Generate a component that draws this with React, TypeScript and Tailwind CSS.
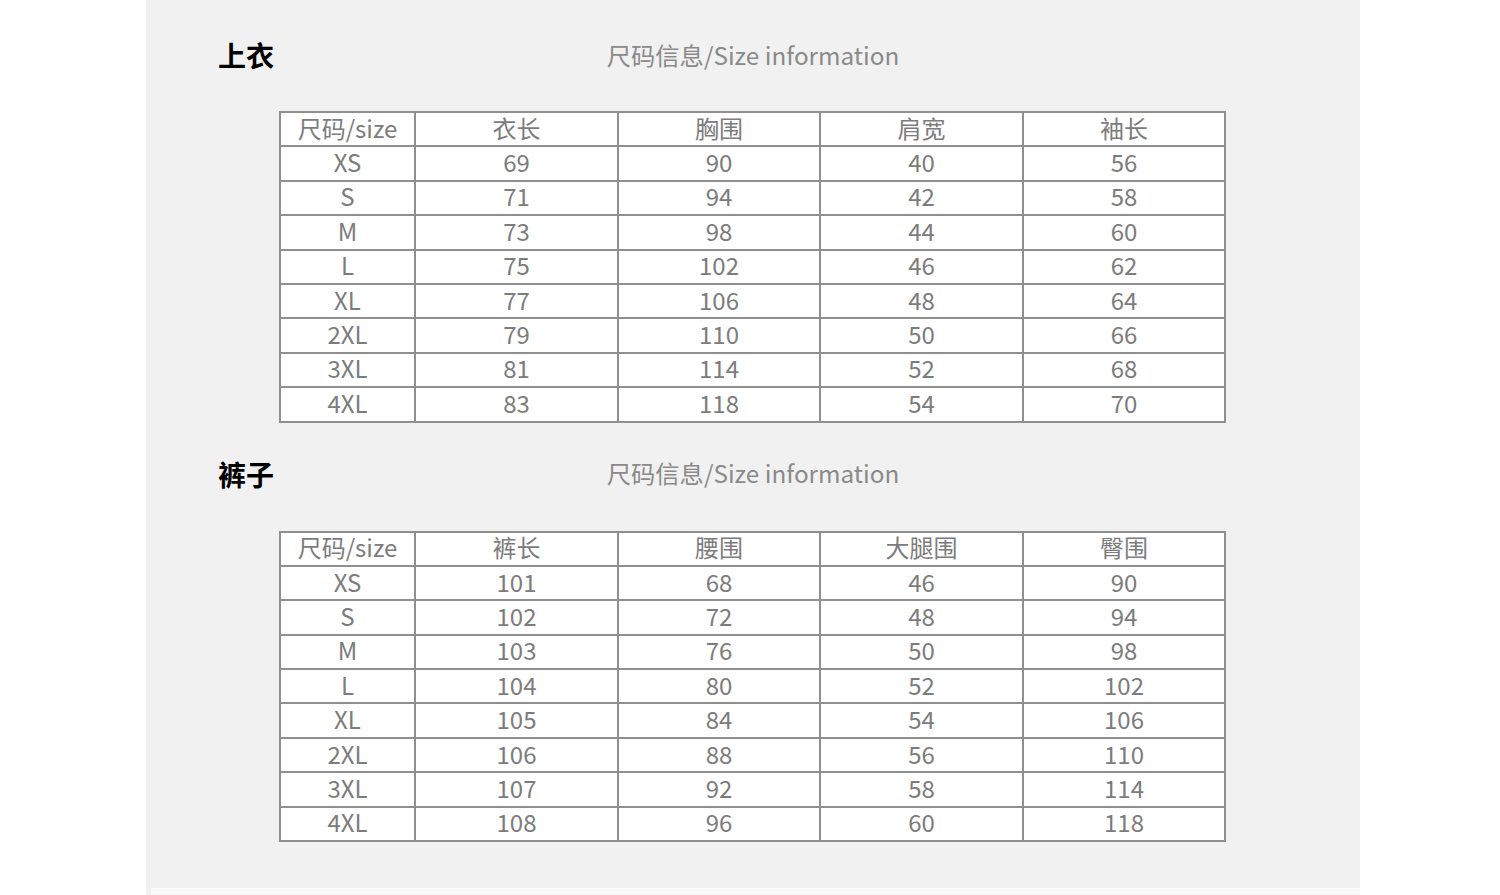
import React from 'react';

const tops = {
  title: '上衣',
  head: ['尺码/size', '衣长', '胸围', '肩宽', '袖长'],
  rows: [
    ['XS', '69', '90', '40', '56'],
    ['S', '71', '94', '42', '58'],
    ['M', '73', '98', '44', '60'],
    ['L', '75', '102', '46', '62'],
    ['XL', '77', '106', '48', '64'],
    ['2XL', '79', '110', '50', '66'],
    ['3XL', '81', '114', '52', '68'],
    ['4XL', '83', '118', '54', '70'],
  ],
};

const pants = {
  title: '裤子',
  head: ['尺码/size', '裤长', '腰围', '大腿围', '臀围'],
  rows: [
    ['XS', '101', '68', '46', '90'],
    ['S', '102', '72', '48', '94'],
    ['M', '103', '76', '50', '98'],
    ['L', '104', '80', '52', '102'],
    ['XL', '105', '84', '54', '106'],
    ['2XL', '106', '88', '56', '110'],
    ['3XL', '107', '92', '58', '114'],
    ['4XL', '108', '96', '60', '118'],
  ],
};

const colWidths = ['w-[135px]', 'w-[203px]', 'w-[202px]', 'w-[203px]', 'w-[202px]'];

function SizeSection({ data, first }: { data: typeof tops; first?: boolean }) {
  return (
    <section className={first ? 'pt-[35px]' : 'pt-[31px]'}>
      <div className="grid grid-cols-[1fr_auto_1fr] items-center h-[40px]">
        <h2 className="pl-[72px] text-[28px] font-bold text-black leading-none">{data.title}</h2>
        <p className="text-[24.3px] text-[#8a8a8a] leading-none">尺码信息/Size information</p>
        <div />
      </div>
      <div className={first ? 'mt-[36px] pl-[133px]' : 'mt-[37px] pl-[133px]'}>
        <table className="table-fixed border-collapse w-[945px] bg-white text-[24px] text-[#7c7c7c] leading-none">
          <colgroup>
            {colWidths.map((w, i) => (
              <col key={i} className={w} />
            ))}
          </colgroup>
          <tbody>
            <tr className="h-[34.4px]">
              {data.head.map((h, i) => (
                <td key={i} className="border-2 border-[#8f8f8f] text-center align-middle p-0 pb-[3px]">{h}</td>
              ))}
            </tr>
            {data.rows.map((row, r) => (
              <tr key={r} className="h-[34.4px]">
                {row.map((c, i) => (
                  <td key={i} className="border-2 border-[#8f8f8f] text-center align-middle p-0 pb-[3px]">{c}</td>
                ))}
              </tr>
            ))}
          </tbody>
        </table>
      </div>
    </section>
  );
}

export default function App() {
  return (
    <div className="w-[1500px] h-[895px] bg-white overflow-hidden font-['Noto_Sans_CJK_SC','Noto_Sans',sans-serif]">
      <div className="ml-[146px] w-[1214px] h-[895px] bg-[#f1f1f1] flex flex-col">
        <div className="h-[888px]">
          <SizeSection data={tops} first />
          <SizeSection data={pants} />
        </div>
        <div className="ml-[5px] flex-1 bg-[#f8f8f8] border-t border-[#fdfdfd]" />
      </div>
    </div>
  );
}
